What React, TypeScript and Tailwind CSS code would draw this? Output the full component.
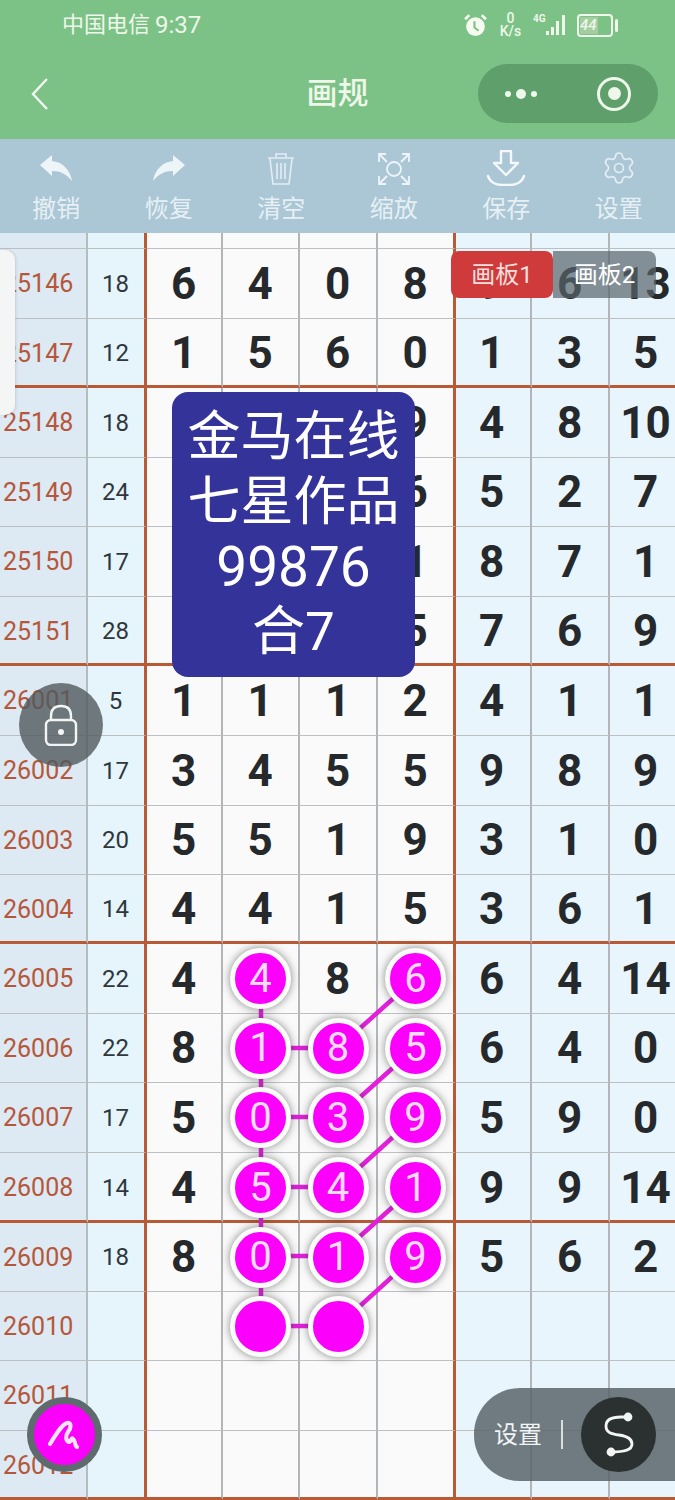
import { Settings } from "lucide-react";

const sans = "font-['Roboto','Noto_Sans_CJK_SC',sans-serif]";

type Row = {
  label: string;
  sum: string;
  nums: string[];
  h: string;
  red?: boolean;
};

const rows: Row[] = [
  { label: "", sum: "", nums: ["", "", "", "", "", "", ""], h: "top" },
  { label: "25146", sum: "18", nums: ["6", "4", "0", "8", "9", "6", "13"], h: "70" },
  { label: "25147", sum: "12", nums: ["1", "5", "6", "0", "1", "3", "5"], h: "69", red: true },
  { label: "25148", sum: "18", nums: ["", "", "", "9", "4", "8", "10"], h: "70" },
  { label: "25149", sum: "24", nums: ["", "", "", "6", "5", "2", "7"], h: "69" },
  { label: "25150", sum: "17", nums: ["", "", "", "1", "8", "7", "1"], h: "70" },
  { label: "25151", sum: "28", nums: ["", "", "", "5", "7", "6", "9"], h: "69", red: true },
  { label: "26001", sum: "5", nums: ["1", "1", "1", "2", "4", "1", "1"], h: "70" },
  { label: "26002", sum: "17", nums: ["3", "4", "5", "5", "9", "8", "9"], h: "70" },
  { label: "26003", sum: "20", nums: ["5", "5", "1", "9", "3", "1", "0"], h: "69" },
  { label: "26004", sum: "14", nums: ["4", "4", "1", "5", "3", "6", "1"], h: "69", red: true },
  { label: "26005", sum: "22", nums: ["4", "@4", "8", "@6", "6", "4", "14"], h: "70" },
  { label: "26006", sum: "22", nums: ["8", "@1", "@8", "@5", "6", "4", "0"], h: "69" },
  { label: "26007", sum: "17", nums: ["5", "@0", "@3", "@9", "5", "9", "0"], h: "70" },
  { label: "26008", sum: "14", nums: ["4", "@5", "@4", "@1", "9", "9", "14"], h: "70", red: true },
  { label: "26009", sum: "18", nums: ["8", "@0", "@1", "@9", "5", "6", "2"], h: "69" },
  { label: "26010", sum: "", nums: ["", "@", "@", "", "", "", ""], h: "69" },
  { label: "26011", sum: "", nums: ["", "", "", "", "", "", ""], h: "70" },
  { label: "26012", sum: "", nums: ["", "", "", "", "", "", ""], h: "69", red: true },
];

const links = [
  [261, 979, 261, 1326],
  [261, 1048, 338, 1048],
  [261, 1117, 338, 1117],
  [261, 1187, 338, 1187],
  [261, 1256, 338, 1256],
  [261, 1326, 338, 1326],
  [338, 1048, 415, 979],
  [338, 1117, 415, 1048],
  [338, 1187, 415, 1117],
  [338, 1256, 415, 1187],
  [338, 1326, 415, 1256],
];

function BallCell({ value }: { value: string }) {
  return (
    <div className="relative z-20 flex h-[61px] w-[61px] items-center justify-center rounded-full border-[5px] border-[#fbfbfb] bg-[#fb00fb] shadow-[0_0_8px_rgba(50,60,50,0.6)]">
      <span className="text-[40px] leading-none font-normal text-[#fbdcfb]">{value}</span>
    </div>
  );
}

function ToolIcon({ name }: { name: string }) {
  if (name === "undo" || name === "redo") {
    return (
      <svg viewBox="0 0 34 34" className={`h-[34px] w-[34px] ${name === "redo" ? "-scale-x-100" : ""}`}>
        <path d="M1 13 L13 3 V9 C23 10 31 17 33 29 C27 22 22 19 13 19 V24 Z" fill="#eef5f8" />
      </svg>
    );
  }
  if (name === "trash") {
    return (
      <svg viewBox="0 0 34 34" className="h-[34px] w-[34px]" fill="none" stroke="#e4eef3" strokeWidth="1.6">
        <path d="M4 6 H30 M12 5 V2 H22 V5 M6 7 L9 32 H25 L28 7 M13 11 V27 M17 11 V27 M21 11 V27" />
      </svg>
    );
  }
  if (name === "zoom") {
    return (
      <svg viewBox="0 0 34 34" className="h-[34px] w-[34px]" fill="none" stroke="#eef5f8" strokeWidth="1.8">
        <circle cx="17" cy="17" r="7" />
        <path d="M2 10 V2 H9 M25 2 H32 V10 M2 24 V32 H9 M25 32 H32 V24" />
        <path d="M3 3 L10 10 M31 3 L24 10 M3 31 L10 24 M31 31 L24 24" />
      </svg>
    );
  }
  if (name === "save") {
    return (
      <svg viewBox="0 0 40 36" className="h-[36px] w-[40px]" fill="none" stroke="#f4f8fa" strokeWidth="2.4">
        <path d="M15 1 H25 V13 H32 L20 25 L8 13 H15 Z" strokeLinejoin="round" />
        <path d="M2 26 C4 32 10 35 16 35 H24 C30 35 36 32 38 26" strokeLinecap="round" />
      </svg>
    );
  }
  return <Settings className="h-[36px] w-[36px] text-[#e4eef3]" strokeWidth={1.1} />;
}

const tools = [
  { icon: "undo", text: "撤销" },
  { icon: "redo", text: "恢复" },
  { icon: "trash", text: "清空" },
  { icon: "zoom", text: "缩放" },
  { icon: "save", text: "保存" },
  { icon: "gear", text: "设置" },
];

export default function App() {
  return (
    <div className={`relative h-[1500px] w-[675px] overflow-hidden bg-[#e8f5fd] ${sans}`}>
      {/* status + nav */}
      <div className="h-[139px] bg-[#7cc286] text-[#eef7ea]">
        <div className="flex h-[50px] items-center justify-between pl-[62px] pr-[57px]">
          <div className="flex items-center leading-none">
            <span className="text-[22px]">中国电信</span>
            <span className="ml-[5px] text-[24px]">9:37</span>
          </div>
          <div className="flex items-center gap-[10px]">
            <svg viewBox="0 0 24 24" className="h-[25px] w-[25px]">
              <circle cx="12" cy="13" r="9" fill="#f6fbf2" />
              <path d="M11 8 V14 L15 17" stroke="#7cc286" strokeWidth="2" fill="none" />
              <path d="M2 6 L6 2 M22 6 L18 2" stroke="#f6fbf2" strokeWidth="2.6" />
            </svg>
            <div className="flex w-[25px] flex-col items-center text-[14px] leading-[13px] font-medium">
              <span>0</span>
              <span>K/s</span>
            </div>
            <svg viewBox="0 0 34 24" className="h-[24px] w-[34px]" fill="#eef7ea">
              <text x="0" y="9" fontSize="10" fontWeight="700">
                4G
              </text>
              <rect x="13" y="18" width="3" height="4" />
              <rect x="18" y="14" width="3" height="8" />
              <rect x="23" y="8" width="3" height="14" />
              <rect x="29" y="2" width="3" height="20" />
            </svg>
            <div className="flex items-center gap-[2px]">
              <div className="flex h-[23px] w-[36px] items-center rounded-[4px] border-2 border-[#eef7ea] p-[1px]">
                <div className="flex h-full w-[60%] items-center bg-[#a5cda0] text-[15px] leading-none font-medium italic">
                  44
                </div>
              </div>
              <div className="h-[13px] w-[3px] rounded-sm bg-[#eef7ea]" />
            </div>
          </div>
        </div>
        <div className="relative flex h-[89px] items-center justify-center pb-[2px]">
          <svg viewBox="0 0 18 32" className="absolute top-[28px] left-[31px] h-[32px] w-[18px]" fill="none" stroke="#f3f9ef" strokeWidth="2.4">
            <path d="M16 1 L2 16 L16 31" />
          </svg>
          <span className="text-[31px] leading-none font-medium">画规</span>
          <div className="absolute top-[14px] left-[478px] flex h-[59px] w-[180px] items-center rounded-full bg-[#5f9f6b]">
            <div className="ml-[27px] flex items-center gap-[5px]">
              <span className="h-[6px] w-[6px] rounded-full bg-[#eef7ea]" />
              <span className="h-[10px] w-[10px] rounded-full bg-[#eef7ea]" />
              <span className="h-[6px] w-[6px] rounded-full bg-[#eef7ea]" />
            </div>
            <div className="ml-[60px] flex h-[34px] w-[34px] items-center justify-center rounded-full border-[3px] border-[#eef7ea]">
              <span className="h-[13px] w-[13px] rounded-full bg-[#eef7ea]" />
            </div>
          </div>
        </div>
      </div>

      {/* toolbar */}
      <div className="grid h-[94px] grid-cols-6 bg-[#abc7d6]">
        {tools.map((t) => (
          <div key={t.text} className="flex flex-col items-center">
            <div className="flex h-[50px] items-end justify-center pb-[3px]">
              <ToolIcon name={t.icon} />
            </div>
            <span className="mt-[6px] text-[24px] leading-[28px] text-[#e6f0f4]">{t.text}</span>
          </div>
        ))}
      </div>

      {/* table */}
      <div className="relative h-[1267px]">
        <div className="grid grid-cols-[88px_59px_76px_77px_78px_78px_76px_78px_74px]">
          {rows.map((r) => {
            const height =
              r.h === "top" ? "h-[16px]" : r.h === "70" ? "h-[70px]" : "h-[69px]";
            const bottom = r.red
              ? "border-b-[3px] border-b-[#b85a35] pt-[2px]"
              : "border-b border-b-[#bcc0c2]";
            const cell = `flex items-center justify-center ${height} ${bottom}`;
            return (
              <div key={r.label + r.h} className="contents">
                <div className={`${cell} justify-start! border-r-2 border-r-[#b4bcc0] bg-[#dde9f3] pl-[3px] text-[25px] leading-none text-[#b5573a]`}>
                  {r.label}
                </div>
                <div className={`${cell} border-r-[3px] border-r-[#b85a35] bg-[#e6f5fc] text-[24px] leading-none text-[#2f373c]`}>
                  <span className="pr-[1px]">{r.sum}</span>
                </div>
                {r.nums.map((n, i) => {
                  const blue = i > 3;
                  const edge =
                    i === 3
                      ? "border-r-[3px] border-r-[#b85a35]"
                      : "border-r-2 border-r-[#b3b6b8]";
                  return (
                    <div
                      key={i}
                      className={`${cell} ${edge} ${blue ? "bg-[#e8f5fd]" : "bg-[#fafafa]"} text-[44px] leading-none font-bold text-[#26292b]`}
                    >
                      {n.startsWith("@") ? (
                        <BallCell value={n.slice(1)} />
                      ) : (
                        <span className={i === 4 ? "pr-[3px]" : "pr-[1px]"}>{n}</span>
                      )}
                    </div>
                  );
                })}
              </div>
            );
          })}
        </div>

        {/* connectors between the balls */}
        <svg viewBox="0 233 675 1267" className="absolute inset-0 z-10 h-full w-full">
          {links.map(([x1, y1, x2, y2]) => (
            <line key={`${x1}-${y1}-${x2}-${y2}`} x1={x1} y1={y1} x2={x2} y2={y2} stroke="#e31fdc" strokeWidth="4.5" />
          ))}
        </svg>

        {/* left pull tab */}
        <div className="absolute top-[17px] left-0 z-30 h-[165px] w-[15px] rounded-r-[10px] bg-[#f4f5f5] shadow-[1px_0_3px_rgba(120,120,120,0.25)]" />

        {/* board tabs */}
        <div className="absolute top-[18px] left-[451px] z-30 flex h-[47px] w-[205px]">
          <div className="flex w-[102px] items-center justify-center rounded-[8px] bg-[#cf3b3a] text-[24px] leading-none text-[#f7dede]">
            画板1
          </div>
          <div className="flex w-[103px] items-center justify-center rounded-r-[8px] bg-[#59646b]/70 text-[24px] leading-none text-white">
            画板2
          </div>
        </div>

        {/* note panel */}
        <div className="absolute top-[159px] left-[172px] z-30 flex h-[285px] w-[243px] flex-col items-center justify-center rounded-[16px] bg-[#333399] text-[53px] leading-[65px] text-white">
          <span>金马在线</span>
          <span>七星作品</span>
          <span className="text-[55px]">99876</span>
          <span>合7</span>
        </div>

        {/* lock button */}
        <div className="absolute top-[450px] left-[19px] z-30 flex h-[84px] w-[84px] items-center justify-center rounded-full bg-[#50595c]/80">
          <svg viewBox="0 0 34 42" className="h-[42px] w-[34px]" fill="none" stroke="#f3f5f5" strokeWidth="2.4">
            <rect x="2" y="16" width="30" height="25" rx="5" />
            <path d="M7 16 V12 C7 5 11 2 17 2 C23 2 27 5 27 12 V16" />
            <circle cx="17" cy="28" r="3" fill="#f3f5f5" stroke="none" />
          </svg>
        </div>

        {/* pen button */}
        <div className="absolute top-[1164px] left-[27px] z-30 flex h-[75px] w-[75px] items-center justify-center rounded-full border-[7px] border-[#5f6a6e] bg-[#fb00fb]">
          <svg viewBox="0 0 36 36" className="h-[36px] w-[36px]" fill="none" stroke="#fbe3fb" strokeWidth="4.2" strokeLinecap="round" strokeLinejoin="round">
            <path d="M3 27 C8 19 14 8 20 6 C25 5 24 12 21 15 C18 19 19 24 22 25 C25 24 24 20 26 22 C29 24 27 28 30 30" />
          </svg>
        </div>

        {/* floating settings bar */}
        <div className="absolute top-[1155px] left-[474px] z-30 flex h-[93px] w-[201px] items-center rounded-l-[46px] bg-[#59646b]/85">
          <span className="ml-[20px] text-[24px] leading-none text-[#f1f4f4]">设置</span>
          <div className="ml-[19px] h-[29px] w-[2px] bg-[#d9dedf]" />
          <div className="ml-[18px] flex h-[75px] w-[75px] items-center justify-center rounded-full bg-[#2b3030]">
            <svg viewBox="0 0 36 46" className="h-[46px] w-[36px]" fill="none" stroke="#f3f5f5" strokeWidth="2.8">
              <path d="M27 5 H20 C12 5 5 7 5 14 C5 21 11 22 18 23 C25 24 31 26 31 32 C31 38 24 40 10 40" />
              <circle cx="27" cy="5" r="4.4" fill="#f3f5f5" stroke="none" />
              <circle cx="10" cy="40" r="4.4" fill="#f3f5f5" stroke="none" />
            </svg>
          </div>
        </div>
      </div>
    </div>
  );
}
